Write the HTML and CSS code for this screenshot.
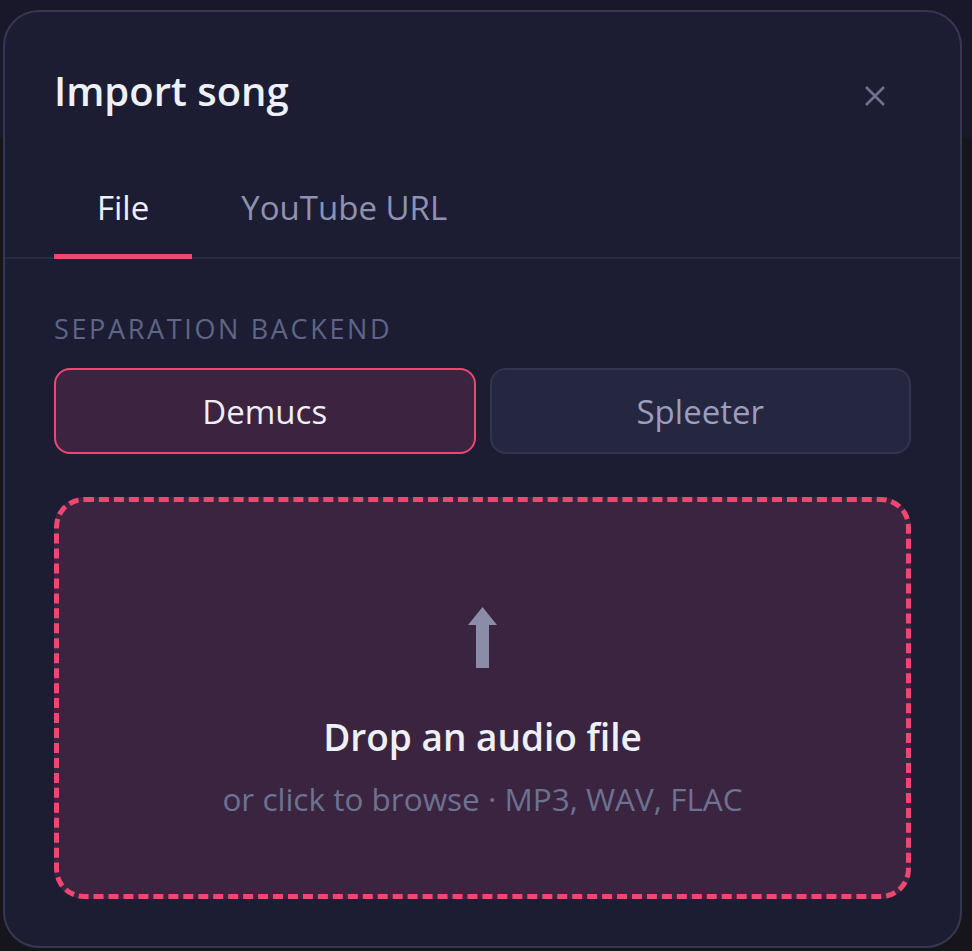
FILE: index.html
```html
<!DOCTYPE html>
<html lang="en">
<head>
<meta charset="utf-8">
<title>Import song</title>
<link rel="stylesheet" href="styles.css">
</head>
<body>
<div class="backdrop">
  <div class="modal">
    <div class="header">
      <h1 class="title">Import song</h1>
      <button class="close" aria-label="Close">
        <svg width="24" height="24" viewBox="0 0 24 24"><path d="M3 3 L21 21 M21 3 L3 21" stroke="#6d7290" stroke-width="2.6" stroke-linecap="butt" fill="none"/></svg>
      </button>
    </div>
    <div class="tabs">
      <div class="tab active">File</div>
      <div class="tab">YouTube URL</div>
    </div>
    <div class="label">Separation backend</div>
    <div class="backends">
      <button class="backend selected">Demucs</button>
      <button class="backend">Spleeter</button>
    </div>
    <div class="dropzone">
      <svg class="arrow" width="29" height="61" viewBox="0 0 29 61"><polygon points="14.5,0 29,18 21,18 21,61 8,61 8,18 0,18" fill="#8a8ca8"/></svg>
      <div class="drop-title">Drop an audio file</div>
      <div class="drop-sub">or click to browse · MP3, WAV, FLAC</div>
    </div>
  </div>
</div>
</body>
</html>
```
FILE: styles.css
```css
* { box-sizing: border-box; }
html, body { margin: 0; padding: 0; }
body {
  width: 972px;
  height: 951px;
  overflow: hidden;
  background: #16151b;
  font-family: "Open Sans", "Noto Sans", sans-serif;
}
.backdrop {
  width: 972px;
  height: 951px;
  padding: 10px 0 0 3px;
  background: linear-gradient(#18182a 0, #18182a 138px, #16151b 138px);
}
.modal {
  width: 959px;
  height: 938px;
  background: #1c1d33;
  border: 2px solid #363850;
  border-radius: 36px;
  padding: 55px 49px 0 49px;
}
.header {
  display: flex;
  justify-content: space-between;
  align-items: center;
  height: 48px;
}
.title {
  margin: 0;
  font-size: 40px;
  line-height: 48px;
  font-weight: 600;
  color: #eef0f8;
}
.close {
  background: none;
  border: 0;
  padding: 0;
  width: 24px;
  height: 24px;
  margin-right: 24px;
  margin-top: 10px;
  display: flex;
}
.tabs {
  display: flex;
  gap: 6px;
  margin: 70px -49px 0 -49px;
  padding: 0 49px;
  border-bottom: 2px solid #2a2b44;
}
.tab {
  font-size: 33px;
  line-height: 46px;
  padding: 0 43px 23px 43px;
  color: #8e92b0;
  border-bottom: 5px solid transparent;
  margin-bottom: -2px;
}
.tab.active {
  color: #eef0f8;
  border-bottom-color: #ef4770;
}
.label {
  margin-top: 52px;
  font-size: 27px;
  line-height: 36px;
  letter-spacing: 2.65px;
  text-transform: uppercase;
  color: #5f6585;
}
.backends {
  display: grid;
  grid-template-columns: 1fr 1fr;
  gap: 14px;
  margin-top: 21px;
}
.backend {
  height: 86px;
  border-radius: 16px;
  border: 2px solid #33344f;
  background: #252640;
  color: #9a9dbc;
  font-family: inherit;
  font-size: 33px;
  padding: 0;
}
.backend.selected {
  border-color: #ef4770;
  background: #3c2440;
  color: #eeeef6;
}
.dropzone {
  margin-top: 43px;
  height: 402px;
  border: 5px dashed #ef4770;
  border-radius: 30px;
  background: #3b2440;
  display: flex;
  flex-direction: column;
  align-items: center;
  padding-top: 105px;
}
.arrow { display: block; }
.drop-title {
  margin-top: 47px;
  font-size: 37px;
  line-height: 44px;
  font-weight: 600;
  color: #eef0f8;
}
.drop-sub {
  margin-top: 20px;
  font-size: 31.5px;
  line-height: 40px;
  color: #6c7290;
}
```
